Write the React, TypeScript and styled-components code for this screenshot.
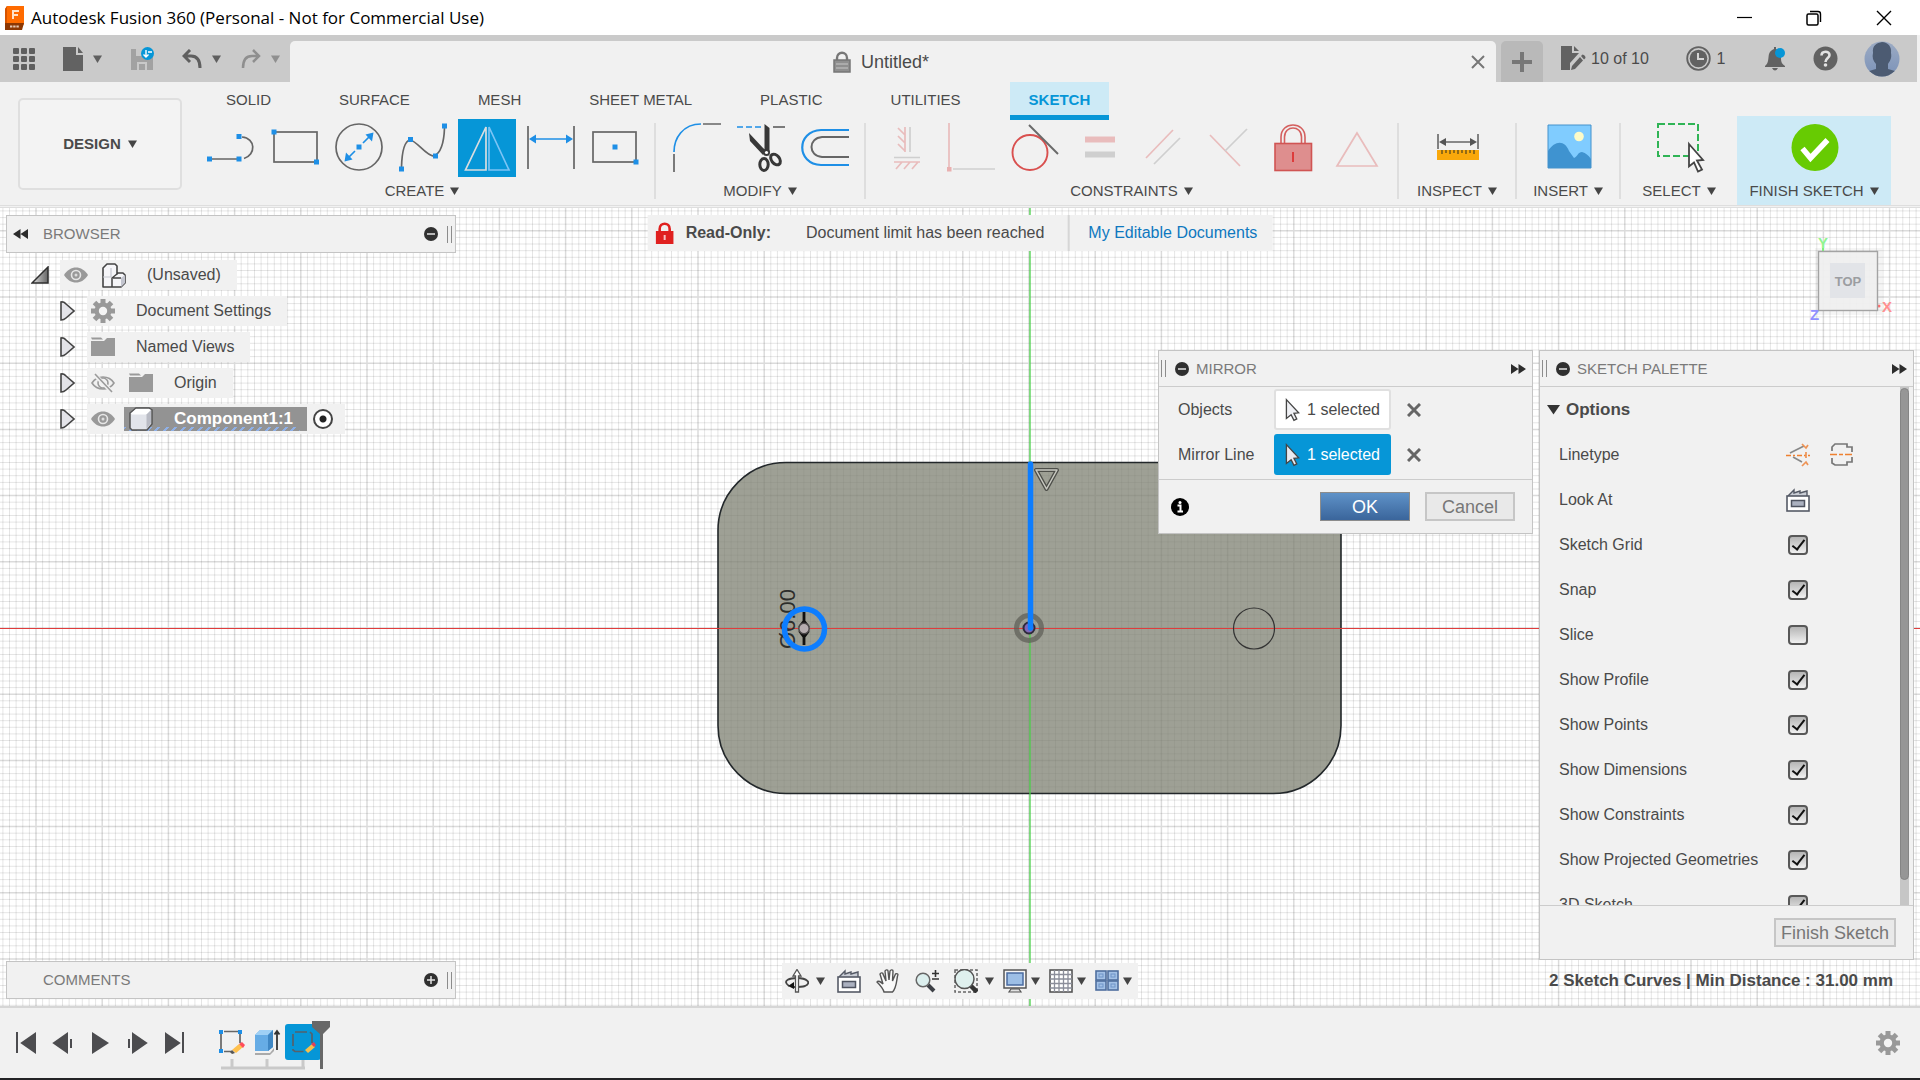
import React from "react";
import styled, { createGlobalStyle, css } from "styled-components";

const BLUE = "#0696d7";
const LINE = "#1e8fe6";
const INK = "#4a4a4a";
const PANEL = "#f1f1f1";

const Global = createGlobalStyle`
  *, *::before, *::after { box-sizing: border-box; }
  html, body { margin: 0; padding: 0; }
  body {
    font-family: "Liberation Sans", Arial, sans-serif;
    font-size: 16px;
    line-height: 20px;
    color: ${INK};
    background: ${PANEL};
  }
  button, input { font: inherit; color: inherit; }
`;

/* ---------- layout ---------- */

const Shell = styled.div`
  display: flex;
  flex-direction: column;
  min-height: 100vh;
  background: ${PANEL};
  border-bottom: 2px solid #232326;
`;

const IconButton = styled.button<{ $w?: number; $h?: number }>`
  display: flex;
  align-items: center;
  justify-content: center;
  flex: none;
  width: ${(p) => (p.$w ? `${p.$w}px` : "auto")};
  height: ${(p) => (p.$h ? `${p.$h}px` : "auto")};
  padding: 0;
  border: 0;
  background: none;
`;

const TitleBar = styled.header`
  display: flex;
  align-items: center;
  height: 35px;
  padding: 0 12px 0 3px;
  gap: 6px;
  background: #fff;
`;

const AppTitle = styled.h1`
  flex: 1;
  margin: 0;
  font: 400 17px/24px "Open Sans", "Noto Sans", sans-serif;
  color: #000;
`;

const WindowControls = styled.div`
  display: flex;
  gap: 22px;
`;

const DocumentBar = styled.div`
  display: flex;
  align-items: stretch;
  height: 47px;
  margin-right: 3px;
  padding-top: 6px;
  background: #cacaca;
`;

const QuickAccess = styled.div`
  display: flex;
  align-items: center;
  width: 290px;
  padding: 0 10px 6px 13px;
  gap: 28px;
`;

const UndoRedo = styled.div`
  display: flex;
  align-items: center;
  gap: 20px;
`;

const SplitTool = styled.div<{ $gap?: number }>`
  display: flex;
  align-items: center;
  gap: ${(p) => p.$gap ?? 4}px;
`;

const DocumentTab = styled.div`
  display: flex;
  flex: 1;
  align-items: center;
  padding-right: 8px;
  border-radius: 5px 5px 0 0;
  background: ${PANEL};
`;

const DocumentName = styled.div`
  display: flex;
  flex: 1;
  align-items: center;
  justify-content: center;
  gap: 10px;
  padding-left: 4px;
  font-size: 18px;
`;

const NewTab = styled(IconButton)`
  margin-left: 5px;
  border-radius: 5px 5px 0 0;
  background: #b9b9b9;
`;

const StatusTools = styled.div`
  display: flex;
  align-items: center;
  justify-content: space-between;
  width: 374px;
  padding: 0 17px 6px 18px;
`;

const AccountTools = styled.div`
  display: flex;
  align-items: center;
  gap: 26px;
`;

const StatusButton = styled.button`
  display: flex;
  align-items: center;
  gap: 5px;
  padding: 0;
  border: 0;
  background: none;
`;

const Ribbon = styled.div`
  display: flex;
  height: 126px;
  border-bottom: 3px double #dedede;
`;

const WorkspaceButton = styled.button`
  display: flex;
  align-items: center;
  justify-content: center;
  flex: none;
  gap: 7px;
  width: 164px;
  height: 92px;
  margin: 16px 8px 0 18px;
  border: 2px solid #dfdfdf;
  border-radius: 5px;
  background: #f3f3f3;
  font-size: 15px;
  font-weight: 700;
`;

const RibbonMain = styled.div`
  display: flex;
  flex: 1;
  flex-direction: column;
`;

const WorkspaceTabs = styled.nav`
  display: flex;
  height: 34px;
  padding-left: 17px;
  gap: 30px;
`;

const WorkspaceTab = styled.button<{ $active?: boolean }>`
  height: 38px;
  padding: 2px 19px 0;
  border: 0;
  border-bottom: 5px solid transparent;
  background: none;
  font-size: 15px;
  line-height: 20px;
  ${(p) =>
    p.$active &&
    css`
      border-color: ${BLUE};
      background: #cdeaf6;
      color: ${BLUE};
      font-weight: 700;
    `}
`;

const ToolGroups = styled.div`
  display: flex;
  height: 89px;
`;

const ToolGroup = styled.section<{ $w: number; $active?: boolean }>`
  display: flex;
  flex-direction: column;
  width: ${(p) => p.$w}px;
  padding: 3px 7px 0;
  background: ${(p) => (p.$active ? "#cdeaf6" : "none")};
`;

const ToolRow = styled.div`
  display: flex;
  height: 58px;
  padding-left: 2px;
`;

const Tool = styled.button<{ $active?: boolean }>`
  display: flex;
  flex: 1;
  align-items: center;
  justify-content: center;
  min-width: 0;
  margin: 0 3px;
  padding: 0;
  border: 0;
  background: ${(p) => (p.$active ? BLUE : "none")};
`;

const GroupLabel = styled.button`
  display: flex;
  align-items: center;
  justify-content: center;
  gap: 6px;
  height: 28px;
  padding: 0;
  border: 0;
  background: none;
  font-size: 15px;
  white-space: nowrap;
`;

const GroupDivider = styled.div`
  width: 2px;
  margin: 7px 0 6px;
  background: #dedede;
`;

const Workspace = styled.main`
  position: relative;
  flex: 1;
  min-height: 798px;
  overflow: hidden;
  background: #fff;
`;

const Drawing = styled.svg`
  position: absolute;
  inset: 0;
  width: 100%;
  height: 100%;
`;

/* ---------- floating panels ---------- */

const Floating = styled.section<{ $pos: string }>`
  position: absolute;
  ${(p) => p.$pos}
`;

const Panel = styled(Floating)`
  display: flex;
  flex-direction: column;
  border: 1px solid #c4c4c4;
  background: ${PANEL};
`;

const PanelHead = styled.div<{ $docked?: boolean }>`
  display: flex;
  align-items: center;
  flex: none;
  height: 36px;
  gap: 7px;
  padding: 0 ${(p) => (p.$docked ? 1 : 6)}px 0 0;
  border-bottom: ${(p) => (p.$docked ? "0" : "1px solid #cccccc")};
`;

const PanelTitle = styled.h2<{ $indent?: number }>`
  flex: 1;
  margin: 0;
  padding-left: ${(p) => p.$indent ?? 0}px;
  font-size: 15px;
  font-weight: 400;
  line-height: 20px;
  color: #7a7a7a;
`;

const Grip = styled.span`
  width: 5px;
  height: 17px;
  margin: 0 2px;
  border: solid #8c8c8c;
  border-width: 0 1px;
`;

const Banner = styled(Floating)`
  display: flex;
  align-items: center;
  height: 36px;
  padding: 0 15px 0 8px;
  background: ${PANEL};
  white-space: nowrap;
  strong { margin: 0 35px 0 12px; }
  a {
    margin-left: 23px;
    padding-left: 19px;
    border-left: 2px solid #d6d6d6;
    line-height: 36px;
    color: #0e78bf;
    text-decoration: none;
  }
`;

const Tree = styled.ul`
  position: absolute;
  top: 52px;
  left: 31px;
  display: flex;
  flex-direction: column;
  gap: 6px;
  margin: 0;
  padding: 0;
  list-style: none;
`;

const TreeItem = styled.li<{ $root?: boolean }>`
  display: flex;
  align-items: center;
  height: 30px;
  gap: ${(p) => (p.$root ? 11 : 12)}px;
  padding-left: ${(p) => (p.$root ? 0 : 29)}px;
`;

const TreeBody = styled.div<{ $end?: number }>`
  display: flex;
  align-items: center;
  height: 30px;
  gap: 14px;
  padding: 0 ${(p) => p.$end ?? 16}px 0 4px;
  background: ${PANEL};
`;

const TreeLabel = styled.span`
  padding-left: 7px;
`;

const Selected = styled.span`
  display: flex;
  align-items: center;
  height: 24px;
  gap: 21px;
  margin-left: -5px;
  padding: 0 14px 0 5px;
  background:
    repeating-linear-gradient(135deg, #8fb0e6 0 2px, #939393 2px 6px) left bottom / 96% 4px no-repeat,
    #939393;
  color: #fff;
  font-size: 17px;
  font-weight: 700;
`;

const ActiveRadio = styled.input`
  appearance: none;
  width: 20px;
  height: 20px;
  margin: 0 0 0 -8px;
  border: 2px solid #444;
  border-radius: 50%;
  background: radial-gradient(circle, #222 0 3px, #fff 4px);
`;

const Fields = styled.div`
  display: flex;
  flex-direction: column;
  gap: 4px;
  height: 93px;
  padding: 2px 0 0 19px;
`;

const Field = styled.div`
  display: grid;
  grid-template-columns: 96px 117px 46px;
  align-items: center;
  height: 41px;
`;

const SelectionBox = styled.button<{ $active?: boolean }>`
  display: flex;
  align-items: center;
  gap: 7px;
  height: 41px;
  padding: 0 9px;
  border: 2px solid ${(p) => (p.$active ? BLUE : "#e0e0e0")};
  border-radius: 3px;
  background: ${(p) => (p.$active ? BLUE : "#fff")};
  color: ${(p) => (p.$active ? "#fff" : INK)};
  white-space: nowrap;
`;

const PanelFoot = styled.div`
  display: flex;
  align-items: center;
  justify-content: flex-end;
  height: 54px;
  gap: 15px;
  padding: 0 17px 0 12px;
  border-top: 1px solid #cccccc;
`;

const Spacer = styled.span`
  flex: 1;
`;

const PushButton = styled.button<{ $primary?: boolean }>`
  min-width: 90px;
  height: 29px;
  padding: 0 5px;
  border: 2px solid #c6c6c6;
  background: #e9e9e9;
  color: #777;
  font-size: 18px;
  line-height: 24px;
  ${(p) =>
    p.$primary &&
    css`
      border: 1px solid #8c8c8c;
      background: linear-gradient(#5f92c8, #3a659b);
      color: #fff;
    `}
`;

const PaletteBody = styled.div`
  display: flex;
  flex: 1;
  min-height: 0;
  overflow: hidden;
`;

const Options = styled.div`
  flex: 1;
`;

const OptionRow = styled.div`
  display: flex;
  align-items: center;
  height: 45px;
  padding: 0 0 0 19px;
  > :first-child { flex: none; width: 227px; white-space: nowrap; }
`;

const OptionIcons = styled.div`
  display: flex;
  gap: 20px;
`;

const OptionsTitle = styled.h3`
  display: flex;
  align-items: center;
  height: 45px;
  gap: 6px;
  margin: 0;
  padding-left: 7px;
  font-size: 17px;
  line-height: 20px;
`;

const Check = styled.input`
  appearance: none;
  display: flex;
  justify-content: center;
  width: 20px;
  height: 20px;
  margin: 0 0 0 2px;
  border: 2px solid #585858;
  border-radius: 4px;
  background: linear-gradient(#b5b5b5, #f0f0f0);
  &:checked::before {
    content: "";
    width: 7px;
    height: 13px;
    border: solid #111;
    border-width: 0 2px 2px 0;
    transform: rotate(38deg);
  }
`;

const ScrollTrack = styled.div`
  width: 9px;
  margin-right: 4px;
  background: #c6c6c6;
`;

const ScrollThumb = styled.div`
  height: 95%;
  margin-top: 1px;
  border: 1px solid #858585;
  border-radius: 5px;
  background: #969696;
`;

const Measure = styled.output`
  position: absolute;
  right: 27px;
  bottom: 15px;
  font-size: 17px;
  font-weight: 700;
  white-space: nowrap;
`;

const NavBar = styled(Floating)`
  display: flex;
  align-items: center;
  gap: 9px;
  height: 36px;
  padding-right: 6px;
  background: ${PANEL};
`;

/* ---------- timeline ---------- */

const Timeline = styled.footer`
  display: flex;
  align-items: center;
  height: 72px;
  padding: 0 20px 0 14px;
  border-top: 2px solid #d6d6d6;
  background: ${PANEL};
`;

const Playback = styled.div`
  display: flex;
  gap: 13px;
`;

const History = styled.div`
  flex: 1;
  padding: 6px 0 0 31px;
  svg { display: block; }
`;

/* ---------- icons ---------- */

type IconProps = { w?: number; h?: number; box?: string; children: React.ReactNode };
const Icon = ({ w = 24, h = w, box, children }: IconProps) => (
  <svg width={w} height={h} viewBox={box ?? `0 0 ${w} ${h}`} fill="none" aria-hidden="true">
    {children}
  </svg>
);

const Caret = ({ color = "#444" }: { color?: string }) => (
  <Icon w={9} h={8}><path d="M0 .5h9L4.5 8z" fill={color} /></Icon>
);

const Dot = ({ x, y }: { x: number; y: number }) => (
  <rect x={x - 2.5} y={y - 2.5} width="5" height="5" fill={LINE} />
);

const G = { stroke: "#666", strokeWidth: 1.7 };
const B = { stroke: LINE, strokeWidth: 1.7 };
const PINK = { stroke: "#e9bcbc", strokeWidth: 1.7 };
const PALE = { stroke: "#cfcfcf", strokeWidth: 1.7 };

type ToolDef = { name: string; art: React.ReactNode; active?: boolean };

const createTools: ToolDef[] = [
  { name: "Line", art: <><path {...G} d="M4 36h27M37 35.5C49 32 49 15 35 14" /><Dot x={2.5} y={36} /><Dot x={32} y={36} /><Dot x={32} y={13.5} /></> },
  { name: "Rectangle", art: <><rect {...G} x="3" y="9" width="43" height="30" /><Dot x={3} y={9} /><Dot x={45.5} y={39} /></> },
  { name: "Circle", art: <><circle {...G} cx="24" cy="24" r="23" /><path {...B} d="M20 28l-8 8M28 20l7-7" /><path d="M9.5 38.5l1.5-9 6.5 7zM38.5 9.5l-1.5 9-6.5-7z" fill={LINE} /><Dot x={24} y={24} /></> },
  { name: "Spline", art: <><path {...G} d="M2.5 44C3 28 6 18 11 17c6 0 17 17 24 16 7-3 10-14 10.5-28" /><Dot x={2.5} y={46} /><Dot x={11.5} y={16.5} /><Dot x={36.5} y={33} /><Dot x={45.5} y={3} /></> },
  { name: "Mirror", active: true, art: <><path d="M23 4v43H2.5z" stroke="#d9dde0" strokeWidth="1.7" /><path d="M26 4v43h20z" stroke="#7cc4f5" strokeWidth="1.7" /></> },
  { name: "Dimension", art: <><path {...G} d="M1 3v43M47 3v43" /><path {...B} d="M4 16h40" /><path d="M2 16l7-4.5v9zM46 16l-7-4.5v9z" fill={LINE} /></> },
  { name: "Center rectangle", art: <><rect {...G} x="2" y="9" width="43" height="30" /><Dot x={24} y={24} /><Dot x={45} y={39} /></> },
];

const modifyTools: ToolDef[] = [
  { name: "Fillet", art: <><path {...G} d="M1 31v18M30 1h18" /><path {...B} d="M1 29C1 15 10 1 28 1" /></> },
  {
    name: "Trim",
    art: (
      <>
        <path {...B} d="M0 4h24" strokeDasharray="6 3" />
        <path {...G} d="M36 4h12" />
        <path d="M27.500 1l5 4v24l-5 2zM12 10l17 18-3 4-13-14z" fill="#383838" />
        <ellipse cx="27" cy="41.5" rx="4.2" ry="6" stroke="#383838" strokeWidth="3" />
        <ellipse cx="38.5" cy="36.5" rx="4" ry="6" transform="rotate(-38 38.5 36.5)" stroke="#383838" strokeWidth="3" />
        <circle cx="29.5" cy="29.5" r="3.5" fill="#383838" /><circle cx="29.5" cy="29.5" r="1.6" fill="#fff" />
      </>
    ),
  },
  { name: "Offset", art: <><path d="M48 7H20C-5 8-5 41 20 42h28" stroke={LINE} strokeWidth="2.2" /><path d="M48 14H21c-14 1-14 19 0 20h27" stroke="#666" strokeWidth="2" /></> },
];

const constraintTools: ToolDef[] = [
  { name: "Horizontal/Vertical", art: <><path {...PINK} d="M22 4v25M22 12l-7-7M22 20l-7-7M22 28l-7-7M11 39h26M19 39l-6 7M27 39l-6 7M35 39l-6 7" /><path {...PALE} d="M27 4v25M11 34.5h26" /></> },
  { name: "Coincident", art: <><path {...PINK} d="M2 0v44" /><path {...PALE} d="M6 46h42" /><rect x="0" y="44" width="4.5" height="4.5" fill="#e9b0b0" /></> },
  { name: "Tangent", art: <><circle cx="19" cy="29.5" r="17.5" stroke="#d9504f" strokeWidth="1.9" /><path d="M18 2l29 29" stroke="#6a6a6a" strokeWidth="1.9" /></> },
  { name: "Equal", art: <><path d="M9 16.5h30" stroke="#e9bcbc" strokeWidth="6" /><path d="M9 31.5h30" stroke="#cfcfcf" strokeWidth="6" /></> },
  { name: "Parallel", art: <><path {...PINK} d="M6 35L33 7" /><path {...PALE} d="M14 41l26-26" /></> },
  { name: "Perpendicular", art: <><path {...PINK} d="M5 12l30 31" /><path {...PALE} d="M20 28L42 6" /></> },
  { name: "Fix", art: <><path d="M12 21v-7c0-16 24-16 24 0v7M15.500 21v-7c0-12 17-12 17 0v7" stroke="#d4605f" strokeWidth="1.6" /><rect x="6" y="20.5" width="36.5" height="27" fill="#de8e8e" stroke="#d05453" strokeWidth="1.6" /><path d="M24 29v10" stroke="#d33" strokeWidth="1.8" /></> },
  { name: "Midpoint", art: <path {...PINK} d="M24 10l20 33H4z" /> },
];

const inspectTools: ToolDef[] = [{
  name: "Measure",
  art: (
    <>
      <path d="M4 11v15M44 11v15M8 19h32" stroke="#666" strokeWidth="1.6" />
      <path d="M5 19l7-4v8zM43 19l-7-4v8z" fill="#555" />
      <path d="M3 27h42v10H3z" fill="#f9a80b" />
      <path d="M8 27v4M12 27v3M16 27v4M20 27v3M24 27v4M28 27v3M32 27v4M36 27v3M40 27v4" stroke="#5c4a1c" strokeWidth="1.3" />
    </>
  ),
}];
const insertTools: ToolDef[] = [{
  name: "Insert image",
  art: (
    <>
      <path d="M3 2h43v43H3z" fill="#80ccff" />
      <circle cx="34" cy="13.5" r="4.8" fill="#fdfbc8" />
      <path d="M3 28c7-11 17-11 21 0l5 7c4-2 4-6 8-6 4 1 6 3 9 7v9H3z" fill="#3f93d0" />
      <path d="M3 2h43v43H3z" stroke="#4592cc" />
    </>
  ),
}];
const selectTools: ToolDef[] = [{
  name: "Window select",
  art: (
    <>
      <path d="M2 1h40v32H2z" stroke="#2fb455" strokeWidth="2" strokeDasharray="7 3" />
      <path d="M33 21l14 16-6 .5 5 9-4 2-4-9-5 4z" fill="#fff" stroke="#444" strokeWidth="1.8" />
    </>
  ),
}];
const finishTools: ToolDef[] = [{
  name: "Finish sketch",
  art: (
    <>
      <circle cx="24" cy="24.5" r="23.5" fill="#67cb02" />
      <path d="M11.5 25.5l8 9.5 17-18" stroke="#fff" strokeWidth="5.5" />
    </>
  ),
}];

const Eye = () => (
  <Icon>
    <path d="M0 12C6 2 18 2 24 12 18 22 6 22 0 12z" fill="#999" />
    <circle cx="12" cy="12" r="4.5" fill="#999" stroke="#e6e6e6" strokeWidth="1.6" />
    <circle cx="12" cy="12" r="1.5" fill="#ddd" />
  </Icon>
);
const EyeOff = () => (
  <Icon>
    <path d="M1 12C6 4 18 4 23 12 18 20 6 20 1 12z" stroke="#9a9a9a" strokeWidth="1.6" />
    <circle cx="12" cy="12" r="5" stroke="#9a9a9a" strokeWidth="1.6" />
    <path d="M4 4l17 17" stroke="#f1f1f1" strokeWidth="4" /><path d="M4 3l17 18" stroke="#9a9a9a" strokeWidth="1.6" />
  </Icon>
);
const Folder = () => (
  <Icon><path d="M0 2.5h10l2 2H1zM0 6h13l3-3h8v18H0z" fill="#999" /></Icon>
);
const Gear = () => (
  <Icon>
    <g stroke="#999" strokeWidth="5"><path d="M12 0v24M0 12h24M3.5 3.5l17 17M20.5 3.5l-17 17" /></g>
    <circle cx="12" cy="12" r="8.5" fill="#999" /><circle cx="12" cy="12" r="4.2" fill="#f4f4f4" />
  </Icon>
);
const Toggle = ({ plus }: { plus?: boolean }) => (
  <Icon w={14}>
    <circle cx="7" cy="7" r="7" fill="#303030" />
    <path d={plus ? "M3 7h8M7 3v8" : "M3 7h8"} stroke="#e4e4e4" strokeWidth="1.5" />
  </Icon>
);
const DoubleArrow = ({ left }: { left?: boolean }) => (
  <Icon w={15} h={10}><path d={left ? "M7.5 0v10L0 5zM15 0v10L7.5 5z" : "M0 0v10l7.5-5zM7.5 0v10L15 5z"} fill="#2c2c2c" /></Icon>
);
const Twisty = () => (
  <Icon w={15} h={20}><path d="M1 1c3-.5 4 1 5 2l8 7-8 7c-2 2-3 2-5 2z" fill="#e3e3e8" stroke="#444" strokeWidth="1.6" /></Icon>
);
const RootTwisty = () => (
  <Icon w={18}>
    <defs><linearGradient id="twist" x1="0" x2="1"><stop offset="0" stopColor="#ddd" /><stop offset="1" stopColor="#666" /></linearGradient></defs>
    <path d="M17 1v16H1z" fill="url(#twist)" stroke="#2e2e2e" strokeWidth="1.5" />
  </Icon>
);
const Cubes = () => (
  <Icon w={24} h={25}>
    <path d="M1 5l4-4h8l2 2v8l1-1h5l2 2v8l-4 4H1z" fill="#f6f6f9" stroke="#444" strokeWidth="1.6" strokeLinejoin="round" />
    <path d="M1 14h8M9 5v9" stroke="#c5c7d0" strokeWidth="1.2" />
    <path d="M10 24v-9l5-4M11 15h8" stroke="#444" strokeWidth="1.5" />
    <path d="M19 15l4-3v8l-4 4z" fill="#c3c5cf" />
  </Icon>
);
const Cube = () => (
  <Icon>
    <path d="M1 6l6-5h13l3 2v14l-5 6H3l-2-2z" fill="#e2e4ea" stroke="#555" strokeWidth="1.5" />
    <path d="M2 6.5L7 2h13l2 1-4.5 4.5H3z" fill="#fff" /><path d="M17.5 7.5L22 3v13l-4.5 6z" fill="#b9bbc4" />
  </Icon>
);
const Pointer = ({ light }: { light?: boolean }) => (
  <Icon w={16} h={24}><path d="M1.5 1l13 14-5 .5 3 6-3 1.5-3-6-5 4z" fill={light ? "#e8eaf0" : "#f0f1f5"} stroke="#454545" strokeWidth="1.4" /></Icon>
);
const Cross = ({ size, color, width }: { size: number; color: string; width: number }) => (
  <Icon w={size}><path d={`M1 1L${size - 1} ${size - 1}M${size - 1} 1L1 ${size - 1}`} stroke={color} strokeWidth={width} /></Icon>
);
const LookAt = () => (
  <Icon>
    <path d="M2 8l6-6v3l6-2v2l7-2v5" fill="#c9cdd5" stroke="#555a66" strokeWidth="1.4" />
    <rect x="1" y="8" width="22" height="15" fill="#fff" stroke="#555a66" strokeWidth="1.6" />
    <rect x="5.500" y="12.5" width="13" height="6" fill="#abb1c0" stroke="#4e5360" strokeWidth="1.5" />
  </Icon>
);
const Padlock = () => (
  <Icon w={18} h={22}>
    <path d="M4 10V7c0-7 10-7 10 0v3" stroke="#e0201f" strokeWidth="2.6" />
    <path d="M0 9h18v13H0z" fill="#e0201f" /><path d="M9 13v5" stroke="#f6c0c0" strokeWidth="2" />
  </Icon>
);

/* ---------- sketch canvas ---------- */

const STEP = 66.2;
const gridPath = (minor: boolean) => {
  const parts: string[] = [];
  for (let i = -160; i <= 160; i++) {
    if ((i % 10 === 0) === minor) continue;
    const d = (i * STEP) / 10;
    parts.push(`M${(1029 + d).toFixed(1)} 208V1006`);
    if (Math.abs(d) < 430) parts.push(`M0 ${(628 + d).toFixed(1)}H1920`);
  }
  return parts.join("");
};

const SketchCanvas = () => (
  <Drawing viewBox="0 208 1920 798" preserveAspectRatio="xMidYMid slice" role="img" aria-label="Sketch">
    <path d={gridPath(true)} stroke="#000" strokeOpacity=".1" />
    <path d={gridPath(false)} stroke="#000" strokeOpacity=".14" strokeWidth="1.5" />
    <rect x="718" y="462.5" width="623" height="331" rx="68" fill="#7c7f70" fillOpacity=".74" />
    <rect x="718" y="462.5" width="623" height="331" rx="68" fill="none" stroke="#22272a" strokeWidth="1.6" />
    <path d="M0 628.5H1920" stroke="#e03c3c" strokeWidth="1.2" />
    <path d="M1030 208V1006" stroke="#4bd04b" strokeWidth="1.3" />
    <circle cx="1254" cy="628.5" r="20.5" fill="none" stroke="#333" strokeWidth="1.2" />
    <text transform="translate(795 649) rotate(-90)" fontSize="22" fill="#2d2e2b">Ø6.00</text>
    <circle cx="1029" cy="628" r="12.5" fill="none" stroke="#5c5d56" strokeWidth="5" strokeOpacity=".7" />
    <circle cx="1029" cy="628" r="5.5" fill="#8067b8" stroke="#2f2a3c" strokeWidth="2" />
    <path d="M1030.5 464V628" stroke="#0d7dff" strokeWidth="5.5" strokeLinecap="round" />
    <path d="M804 612v33M804 621l-3 4h6zM804 637l-3-4h6z" stroke="#111" strokeWidth="2.8" />
    <circle cx="804.5" cy="629" r="20" fill="none" stroke="#0d7dff" strokeWidth="5.5" />
    <circle cx="804" cy="628.5" r="5.2" fill="#b5adaf" stroke="#4a4748" strokeWidth="1.5" />
    <path d="M1036 470h21l-10.5 19z" fill="none" stroke="#4d4e49" strokeWidth="4" strokeLinejoin="round" />
    <path d="M1036 470h21l-10.5 19z" fill="none" stroke="#c9cac2" strokeWidth="1.5" strokeLinejoin="round" />
    <g fontFamily="Liberation Sans, Arial, sans-serif" fontWeight="700">
      <rect x="1815" y="248" width="67" height="67" fill="#000" fillOpacity=".04" />
      <path d="M1823 248v4" stroke="#7df07d" strokeWidth="2" />
      <circle cx="1879" cy="306" r="1.5" fill="#ff6d6d" />
      <rect x="1818.5" y="251.5" width="59" height="59" fill="#efefef" fillOpacity=".95" stroke="#a3a3a3" strokeWidth="1.4" />
      <rect x="1830" y="263" width="35" height="35" fill="#e2e4e8" />
      <text x="1848" y="286" fontSize="13" textAnchor="middle" fill="#9b9da1">TOP</text>
      <text x="1818" y="248" fontSize="15" fill="#90f590">Y</text>
      <text x="1882" y="312" fontSize="15" fill="#ff9090">X</text>
      <text x="1810" y="320" fontSize="15" fill="#9090ff">Z</text>
    </g>
  </Drawing>
);

/* ---------- app ---------- */

const Group = ({ label, width, tools, active }: { label: string; width: number; tools: ToolDef[]; active?: boolean }) => (
  <ToolGroup $w={width} $active={active}>
    <ToolRow>
      {tools.map((t) => (
        <Tool key={t.name} aria-label={t.name} $active={t.active}><Icon w={49} h={50}>{t.art}</Icon></Tool>
      ))}
    </ToolRow>
    <GroupLabel>{label}<Caret /></GroupLabel>
  </ToolGroup>
);

const options: [string, boolean][] = [
  ["Sketch Grid", true],
  ["Snap", true],
  ["Slice", false],
  ["Show Profile", true],
  ["Show Points", true],
  ["Show Dimensions", true],
  ["Show Constraints", true],
  ["Show Projected Geometries", true],
  ["3D Sketch", true],
];

const playback: [string, string][] = [
  ["Go to start", "M3 1v21M21 3v18L8 12z"],
  ["Step back", "M3 12L16 3v18zM20 8v9"],
  ["Play", "M4 1l17 11L4 23z"],
  ["Step forward", "M4 8v9M8 3l13 9L8 21z"],
  ["Go to end", "M4 3l13 9L4 21zM21 1v21"],
];

export default function App() {
  return (
    <Shell>
      <Global />
      <TitleBar>
        <Icon w={22} h={24}>
          <path d="M4 0h17v18l-4 6H2V3z" fill="#ff6b00" /><path d="M2 17h19l-2 7H2z" fill="#8c3703" />
          <path d="M4 0v17H2V3z" fill="#d65400" />
          <path d="M10 13V5h6M10 9h5" stroke="#ffe3c9" strokeWidth="2" />
          <path d="M7 20.5h9" stroke="#e6c7b3" strokeWidth="1.8" strokeDasharray="2.4 .8" />
        </Icon>
        <AppTitle>Autodesk Fusion 360 (Personal - Not for Commercial Use)</AppTitle>
        <WindowControls>
          <IconButton $w={48} $h={30} aria-label="Minimize"><Icon w={15}><path d="M0 7.5h15" stroke="#000" strokeWidth="1.2" /></Icon></IconButton>
          <IconButton $w={48} $h={30} aria-label="Restore"><Icon w={16}><rect x="1" y="4" width="11" height="11" rx="1.5" stroke="#000" strokeWidth="1.5" /><path d="M4 1.5h8q2.5 0 2.5 2.5v8" stroke="#000" strokeWidth="1.4" /></Icon></IconButton>
          <IconButton $w={48} $h={30} aria-label="Close"><Cross size={16} color="#000" width={1.4} /></IconButton>
        </WindowControls>
      </TitleBar>

      <DocumentBar>
        <QuickAccess>
          <IconButton $w={22} $h={24} aria-label="Data panel">
            <Icon w={22}><g fill="#5f5f5f">{[0, 8, 16].flatMap((x) => [0, 8, 16].map((y) => <rect key={`${x}-${y}`} x={x} y={y} width="6" height="6" rx="1" />))}</g></Icon>
          </IconButton>
          <SplitTool $gap={9}>
            <IconButton aria-label="File"><Icon w={21} h={24}><path d="M0 0h13v8h7v16H0z" fill="#626262" /><path d="M15 0l5 6h-5z" fill="#626262" /></Icon></IconButton>
            <Caret color="#5f5f5f" />
          </SplitTool>
          <IconButton $w={24} $h={24} aria-label="Save">
            <Icon>
              <path d="M1 2h18l4 4v17H1z" fill="#a2a2a2" /><path d="M6 2h10v7H6zM7 15h10v8H7z" fill="#c9c9c9" /><path d="M9 17h6v6H9z" fill="#a2a2a2" />
              <circle cx="17.5" cy="6.5" r="6.5" fill={BLUE} /><path d="M16 3v7M13.5 7.5L16 10l2.5-2.5M18 5h4" stroke="#fff" strokeWidth="1.4" />
            </Icon>
          </IconButton>
          <UndoRedo>
            <SplitTool $gap={10}>
              <IconButton aria-label="Undo"><Icon w={20} h={20}><path d="M8 1L2 7l6 6M2 7h7c6 0 9 4 9 12" stroke="#5f5f5f" strokeWidth="3" /></Icon></IconButton>
              <Caret color="#5f5f5f" />
            </SplitTool>
            <SplitTool $gap={10}>
              <IconButton aria-label="Redo"><Icon w={20} h={20}><path d="M12 1l6 6-6 6M18 7h-7c-6 0-9 4-9 12" stroke="#8f8f8f" strokeWidth="2.5" /></Icon></IconButton>
              <Caret color="#8f8f8f" />
            </SplitTool>
          </UndoRedo>
        </QuickAccess>
        <DocumentTab>
          <DocumentName>
            <Icon w={18} h={22}><path d="M4 10V7c0-7 10-7 10 0v3" stroke="#777" strokeWidth="2.4" /><path d="M1 9h16v12H1z" fill="#8f8f8f" stroke="#777" strokeWidth="1.5" /><path d="M3 13h12M3 17h12" stroke="#b5b5b5" strokeWidth="1.5" /></Icon>
            Untitled*
          </DocumentName>
          <IconButton $w={20} $h={24} aria-label="Close document"><Cross size={14} color="#777" width={2} /></IconButton>
        </DocumentTab>
        <NewTab $w={42} aria-label="New document"><Icon w={20}><path d="M10 0v20M0 10h20" stroke="#777" strokeWidth="4" /></Icon></NewTab>
        <StatusTools>
          <StatusButton>
            <Icon w={25}>
              <path d="M0 0h11v7h7l-9 10v7H0z" fill="#626262" /><path d="M13 0l5 5h-5z" fill="#626262" />
              <path d="M11 20l8-9 3 3.5-8 8.5-4 1zM20 10l1.5-1.5q3 .5 3 3.5L23 13.500z" fill="#626262" />
            </Icon>
            10 of 10
          </StatusButton>
          <StatusButton>
            <Icon w={25}><circle cx="12.5" cy="12.5" r="11.3" stroke="#626262" strokeWidth="1.8" /><circle cx="12.5" cy="12.5" r="8.8" fill="#626262" /><path d="M12 7v6h6" stroke="#d5d5d5" strokeWidth="2" /></Icon>
            1
          </StatusButton>
          <AccountTools>
            <IconButton aria-label="Notifications">
              <Icon><path d="M2 19c4-3 3-8 4-12 1-3 3-4 5-5V0h2v2c5 2 5 6 5 10 0 3 1 5 4 7v1H2zM9 21h6q-3 5-6 0z" fill="#626262" /><circle cx="17" cy="6" r="5" fill={BLUE} /></Icon>
            </IconButton>
            <IconButton aria-label="Help">
              <Icon w={25}><circle cx="12.5" cy="12.5" r="12" fill="#626262" /><path d="M8.5 9.5c0-5 8-5 8-.5 0 3-4 3-4 7" stroke="#e3e3e3" strokeWidth="2.6" /><circle cx="12.5" cy="19" r="1.8" fill="#e3e3e3" /></Icon>
            </IconButton>
            <IconButton aria-label="Profile">
              <Icon w={36}>
                <defs><linearGradient id="avatar" x2="0" y2="1"><stop stopColor="#9cabc4" /><stop offset="1" stopColor="#7b92b8" /></linearGradient><clipPath id="face"><circle cx="18" cy="18" r="17.5" /></clipPath></defs>
                <g clipPath="url(#face)"><path d="M0 0h36v36H0z" fill="url(#avatar)" /><path d="M9 12C8 4 13 2 18 1c6 0 10 5 9 11 1 5-1 8-3 11v5l7 2v6H5v-6l7-2v-5c-3-3-4-7-3-11z" fill="#4c5b72" /></g>
              </Icon>
            </IconButton>
          </AccountTools>
        </StatusTools>
      </DocumentBar>

      <Ribbon>
        <WorkspaceButton>DESIGN<Caret /></WorkspaceButton>
        <RibbonMain>
          <WorkspaceTabs aria-label="Workspace tabs">
            {["SOLID", "SURFACE", "MESH", "SHEET METAL", "PLASTIC", "UTILITIES", "SKETCH"].map((t) => (
              <WorkspaceTab key={t} $active={t === "SKETCH"}>{t}</WorkspaceTab>
            ))}
          </WorkspaceTabs>
          <ToolGroups>
            <Group label="CREATE" width={464} tools={createTools} />
            <GroupDivider />
            <Group label="MODIFY" width={208} tools={modifyTools} />
            <GroupDivider />
            <Group label="CONSTRAINTS" width={531} tools={constraintTools} />
            <GroupDivider />
            <Group label="INSPECT" width={116} tools={inspectTools} />
            <GroupDivider />
            <Group label="INSERT" width={102} tools={insertTools} />
            <GroupDivider />
            <Group label="SELECT" width={116} tools={selectTools} />
            <Group label="FINISH SKETCH" width={154} active tools={finishTools} />
          </ToolGroups>
        </RibbonMain>
      </Ribbon>

      <Workspace>
        <SketchCanvas />

        <Panel $pos="top: 7px; left: 6px; width: 450px;">
          <PanelHead $docked>
            <IconButton $w={27} aria-label="Collapse browser"><DoubleArrow left /></IconButton>
            <PanelTitle $indent={2}>BROWSER</PanelTitle>
            <IconButton aria-label="Minimize browser"><Toggle /></IconButton>
            <Grip />
          </PanelHead>
        </Panel>

        <Tree>
          <TreeItem $root>
            <RootTwisty />
            <TreeBody><Eye /><Cubes /><TreeLabel>(Unsaved)</TreeLabel></TreeBody>
          </TreeItem>
          <TreeItem><Twisty /><TreeBody><Gear /><TreeLabel>Document Settings</TreeLabel></TreeBody></TreeItem>
          <TreeItem><Twisty /><TreeBody><Folder /><TreeLabel>Named Views</TreeLabel></TreeBody></TreeItem>
          <TreeItem><Twisty /><TreeBody><EyeOff /><Folder /><TreeLabel>Origin</TreeLabel></TreeBody></TreeItem>
          <TreeItem>
            <Twisty />
            <TreeBody $end={12}>
              <Eye />
              <Selected><Cube />Component1:1</Selected>
              <ActiveRadio type="radio" aria-label="Activate Component1:1" defaultChecked />
            </TreeBody>
          </TreeItem>
        </Tree>

        <Banner $pos="top: 7px; left: 50%; transform: translateX(-50%);">
          <Padlock />
          <strong>Read-Only:</strong>
          <span>Document limit has been reached</span>
          <a href="#documents">My Editable Documents</a>
        </Banner>

        <Panel $pos="top: 142px; right: 387px; width: 375px; height: 184px;">
          <PanelHead>
            <Grip />
            <IconButton aria-label="Minimize mirror"><Toggle /></IconButton>
            <PanelTitle>MIRROR</PanelTitle>
            <IconButton aria-label="Dock mirror"><DoubleArrow /></IconButton>
          </PanelHead>
          <Fields>
            <Field>
              <label htmlFor="objects">Objects</label>
              <SelectionBox id="objects"><Pointer />1 selected</SelectionBox>
              <IconButton aria-label="Clear objects"><Cross size={14} color="#666" width={3} /></IconButton>
            </Field>
            <Field>
              <label htmlFor="mirror-line">Mirror Line</label>
              <SelectionBox id="mirror-line" $active><Pointer light />1 selected</SelectionBox>
              <IconButton aria-label="Clear mirror line"><Cross size={14} color="#666" width={3} /></IconButton>
            </Field>
          </Fields>
          <PanelFoot>
            <IconButton aria-label="Info"><Icon w={18}><circle cx="9" cy="9" r="9" fill="#000" /><path d="M6.5 7.5H9.5V13M6.5 13.5h5.5" stroke="#fff" strokeWidth="2" /><circle cx="9" cy="4.5" r="1.5" fill="#fff" /></Icon></IconButton>
            <Spacer />
            <PushButton $primary>OK</PushButton>
            <PushButton>Cancel</PushButton>
          </PanelFoot>
        </Panel>

        <Panel $pos="top: 142px; right: 6px; bottom: 46px; width: 375px;">
          <PanelHead>
            <Grip />
            <IconButton aria-label="Minimize palette"><Toggle /></IconButton>
            <PanelTitle>SKETCH PALETTE</PanelTitle>
            <IconButton aria-label="Dock palette"><DoubleArrow /></IconButton>
          </PanelHead>
          <PaletteBody>
            <Options>
              <OptionsTitle><Icon w={13} h={10}><path d="M0 0h13L6.5 9.5z" fill="#333" /></Icon>Options</OptionsTitle>
              <OptionRow>
                <span>Linetype</span>
                <OptionIcons>
                  <IconButton aria-label="Construction">
                    <Icon>
                      <path d="M4 10L18 3M7 14l9 5" stroke="#888" strokeWidth="1.7" />
                      <path d="M0 12.5h24" stroke="#ee8130" strokeWidth="1.7" strokeDasharray="5 2 2 2" />
                      <path d="M16 1l4 4 2-3M16 23l4-4 2 3M20 9v6" stroke="#ee9355" strokeWidth="1.7" />
                    </Icon>
                  </IconButton>
                  <IconButton aria-label="Centerline">
                    <Icon><path d="M2 8V4l3-3h12v3h5v5M2 15v5l3 2h12v-3h5v-5" stroke="#777" strokeWidth="1.7" /><path d="M0 11.5h24" stroke="#ee8130" strokeWidth="1.7" strokeDasharray="7 2 4 2" /></Icon>
                  </IconButton>
                </OptionIcons>
              </OptionRow>
              <OptionRow><span>Look At</span><IconButton aria-label="Look At"><LookAt /></IconButton></OptionRow>
              {options.map(([label, on]) => {
                const id = label.toLowerCase().replace(/ /g, "-");
                return (
                  <OptionRow key={id}>
                    <label htmlFor={id}>{label}</label>
                    <Check id={id} type="checkbox" defaultChecked={on} />
                  </OptionRow>
                );
              })}
            </Options>
            <ScrollTrack><ScrollThumb /></ScrollTrack>
          </PaletteBody>
          <PanelFoot><PushButton>Finish Sketch</PushButton></PanelFoot>
        </Panel>

        <Panel $pos="bottom: 7px; left: 6px; width: 450px;">
          <PanelHead $docked>
            <PanelTitle $indent={36}>COMMENTS</PanelTitle>
            <IconButton aria-label="Expand comments"><Toggle plus /></IconButton>
            <Grip />
          </PanelHead>
        </Panel>

        <NavBar $pos="bottom: 7px; left: 50%; transform: translateX(-50%);">
          <SplitTool>
            <IconButton $w={30} aria-label="Orbit">
              <Icon>
                <path d="M4 17C-4 11 6 9 12 9c10 0 15 5 8 8-3 1-7 1-11 1" stroke="#444" strokeWidth="1.9" />
                <path d="M10.5 23V7H8l4-6.500L16 7h-2.500v16z" fill="#fff" stroke="#555" strokeWidth="1.3" />
                <path d="M3 17l6-4v7z" fill="#111" />
              </Icon>
            </IconButton>
            <Caret />
          </SplitTool>
          <IconButton $w={30} aria-label="Look at"><LookAt /></IconButton>
          <IconButton $w={30} aria-label="Pan">
            <Icon>
              <path d="M8 23c-1-4-4-7-7-10 1-2 4 0 6 2L4 5c1-2 3-1 3 0l3 7-1-10c1-2 3-1 3 0l1 9 1-9c1-2 3-1 3 0l-.5 10 3-7c2-1 3 0 2 2-1 5-1 12-5 16z" fill="#fafafa" stroke="#555" strokeWidth="1.4" />
            </Icon>
          </IconButton>
          <IconButton $w={30} aria-label="Zoom">
            <Icon>
              <path d="M13 16l6 6" stroke="#3d4046" strokeWidth="4" /><circle cx="8" cy="11" r="6.8" fill="#dcefee" stroke="#666" strokeWidth="1.5" />
              <path d="M17 4.500h7M20.500 1v7M17 10h7" stroke="#333" strokeWidth="1.6" />
            </Icon>
          </IconButton>
          <SplitTool>
            <IconButton $w={30} aria-label="Zoom window">
              <Icon>
                <path d="M1 1h22v22H1z" stroke="#666" strokeWidth="1.5" strokeDasharray="3 2" /><path d="M16 16l7 7" stroke="#333" strokeWidth="4.5" />
                <circle cx="10.5" cy="10" r="9.5" fill="#dff0ee" stroke="#555" strokeWidth="1.5" />
              </Icon>
            </IconButton>
            <Caret />
          </SplitTool>
          <SplitTool>
            <IconButton aria-label="Display settings">
              <Icon>
                <rect x="1" y="1" width="22" height="18" fill="#f5f5f5" stroke="#555" strokeWidth="1.5" /><rect x="4" y="4" width="16" height="12" fill="#9dbfe6" stroke="#4a6ba0" strokeWidth="1.5" />
                <path d="M8 20h8l2 3H6z" fill="#e2e2e2" stroke="#555" strokeWidth="1.2" />
              </Icon>
            </IconButton>
            <Caret />
          </SplitTool>
          <SplitTool>
            <IconButton aria-label="Grid and snaps">
              <Icon>
                <rect x="1" y="1" width="22" height="22" fill="#fff" stroke="#555" strokeWidth="1.6" />
                <path d="M5.5 1v22M10 1v22M14.5 1v22M19 1v22M1 5.5h22M1 10h22M1 14.5h22M1 19h22" stroke="#8b8e9a" strokeWidth="1.3" />
              </Icon>
            </IconButton>
            <Caret />
          </SplitTool>
          <SplitTool>
            <IconButton aria-label="Viewports">
              <Icon>
                {[1, 13].flatMap((x) => [2, 12].map((y) => (
                  <g key={`${x}-${y}`} stroke="#4f6f9f"><rect x={x} y={y} width="10" height="9" fill="#a3c1e6" strokeWidth="1.6" /><rect x={x + 3} y={y + 3} width="4" height="3" stroke="#6e94c8" /></g>
                )))}
              </Icon>
            </IconButton>
            <Caret />
          </SplitTool>
        </NavBar>

        <Measure>2 Sketch Curves | Min Distance : 31.00 mm</Measure>
      </Workspace>

      <Timeline>
        <Playback>
          {playback.map(([name, d]) => (
            <IconButton key={name} $w={24} aria-label={name}><Icon><path d={d} fill="#4c4c4f" stroke="#4c4c4f" strokeWidth={name === "Play" ? 0 : 2} /></Icon></IconButton>
          ))}
        </Playback>
        <History>
          <svg width="114" height="50" viewBox="0 0 114 50" fill="none" role="img" aria-label="Timeline features">
            <path d="M4 47h84M15 38v9M50 38v9M86 38v9" stroke="#c9c9c9" strokeWidth="3" />
            <path d="M4 12v18M7 10.5h14M23 13v9M7 30.5h7" stroke="#666" strokeWidth="1.7" />
            <g fill={LINE}><path d="M2 9h4v4H2zM21 9h4v4h-4zM2 28h4v4H2z" /></g>
            <path d="M15 29l7-6 4 3-7 6z" fill="#ffc04d" /><path d="M22 23l3-2 3 3-2 3z" fill="#ff4d5b" /><path d="M13 31l2-2 3 3-3 1z" fill="#555" />
            <path d="M38 32l15 0 4-5v3l-4 4H38z" fill="#aaa" />
            <path d="M38 14l5-5h13v17l-5 4H38z" fill="#66ace5" /><path d="M38 14l5-5h13l-5 5z" fill="#9fd0f5" /><path d="M51 14l5-5v17l-5 4z" fill="#3f87c4" />
            <path d="M60 29V11M57.5 13.5L60 10l2.5 3.5" stroke="#333" strokeWidth="1.8" />
            <rect x="68" y="3" width="36" height="36" rx="3" fill={BLUE} />
            <path d="M78 11h15l2 2v9M76 13v16l2 1.5h9" stroke="#56616b" strokeWidth="1.7" strokeDasharray="12 3" />
            <path d="M88 29l7-6 3 3-7 6z" fill="#f5c04d" /><path d="M94 23l3-2 2 3-2 2z" fill="#e0405b" />
            <path d="M95 0h18v6l-7 7v35h-3V13l-8-7z" fill="#686868" />
          </svg>
        </History>
        <IconButton aria-label="Timeline settings"><Gear /></IconButton>
      </Timeline>
    </Shell>
  );
}
